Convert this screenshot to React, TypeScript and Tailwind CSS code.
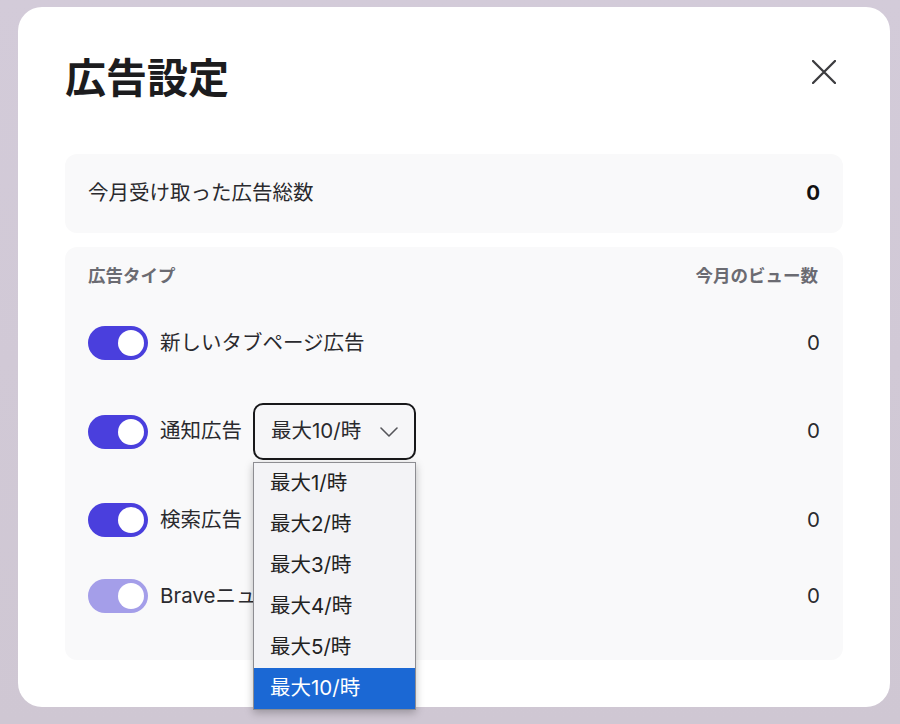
const font = "font-['Inter','Noto_Sans_CJK_JP',sans-serif]"

function Toggle({ dim }: { dim?: boolean }) {
  return (
    <div
      className={`flex h-[34px] w-[60px] shrink-0 items-center justify-end rounded-full pr-[4px] ${
        dim ? "bg-[#a49ee9]" : "bg-[#4a3fdd]"
      }`}
    >
      <div className="h-[26px] w-[26px] rounded-full bg-white" />
    </div>
  )
}

const options = ["最大1/時", "最大2/時", "最大3/時", "最大4/時", "最大5/時", "最大10/時"]

export default function App() {
  return (
    <div className={`h-[724px] w-[900px] overflow-hidden bg-gradient-to-b from-[#d3cbd9] to-[#cfc7d3] pl-[18px] pt-[7px] ${font}`}>
      <div className="h-[700px] w-[872px] rounded-[24px] bg-white px-[47px] pt-[43px]">
        <div className="flex items-center justify-between">
          <h1 className="text-[41px] font-bold leading-[56px] text-[#1c1c1e]">広告設定</h1>
          <button className="mr-[7px] mt-[-12px] text-[#3c3c3f]">
            <svg width="24" height="24" viewBox="0 0 24 24" fill="none" stroke="currentColor" strokeWidth="2.3" strokeLinecap="round">
              <path d="M1 1L23 23M23 1L1 23" />
            </svg>
          </button>
        </div>

        <div className="mt-[48px] flex h-[79px] items-center justify-between rounded-[12px] bg-[#f9f9fa] px-[23px] text-[20.5px] text-[#2a2a2e]">
          <span>今月受け取った広告総数</span>
          <span className="font-bold text-[#111]">0</span>
        </div>

        <div className="mt-[14px] flex h-[413px] flex-col rounded-[12px] bg-[#f9f9fa] px-[23px] pt-[18px] text-[20.5px] text-[#2a2a2e]">
          <div className="flex h-[22px] items-center justify-between text-[17.5px] font-bold text-[#6b6b72]">
            <span>広告タイプ</span>
            <span className="mr-[2px]">今月のビュー数</span>
          </div>

          <div className="mt-[38px] flex h-[36px] items-center justify-between">
            <div className="flex items-center gap-[12px]">
              <Toggle />
              <span>新しいタブページ広告</span>
            </div>
            <span>0</span>
          </div>

          <div className="mt-[42px] flex h-[57px] items-center justify-between">
            <div className="flex items-center gap-[12px]">
              <Toggle />
              <span>通知広告</span>
              <div className="relative ml-[-1px]">
                <div className="flex h-[57px] w-[163px] items-center justify-between rounded-[10px] border-2 border-[#18181a] bg-[#f6f6f8] pl-[16px] pr-[16px]">
                  <span>最大10/時</span>
                  <svg width="18" height="10" viewBox="0 0 18 10" fill="none" stroke="#55555a" strokeWidth="1.6" strokeLinecap="round" strokeLinejoin="round">
                    <path d="M1 1L9 9L17 1" />
                  </svg>
                </div>
                <ul className="absolute left-0 top-[59px] z-10 w-[163px] border border-[#8d8d92] bg-[#f3f3f6] shadow-[0_3px_8px_rgba(0,0,0,0.25)]">
                  {options.map((o, i) => (
                    <li
                      key={o}
                      className={`flex h-[41px] items-center pl-[16px] ${
                        i === options.length - 1 ? "bg-[#1b68d4] text-white" : "text-[#222]"
                      }`}
                    >
                      {o}
                    </li>
                  ))}
                </ul>
              </div>
            </div>
            <span>0</span>
          </div>

          <div className="mt-[42px] flex h-[36px] items-center justify-between">
            <div className="flex items-center gap-[12px]">
              <Toggle />
              <span>検索広告</span>
            </div>
            <span>0</span>
          </div>

          <div className="mt-[40px] flex h-[36px] items-center justify-between">
            <div className="flex items-center gap-[12px]">
              <Toggle dim />
              <span>Braveニュース広告</span>
            </div>
            <span>0</span>
          </div>
        </div>
      </div>
    </div>
  )
}
